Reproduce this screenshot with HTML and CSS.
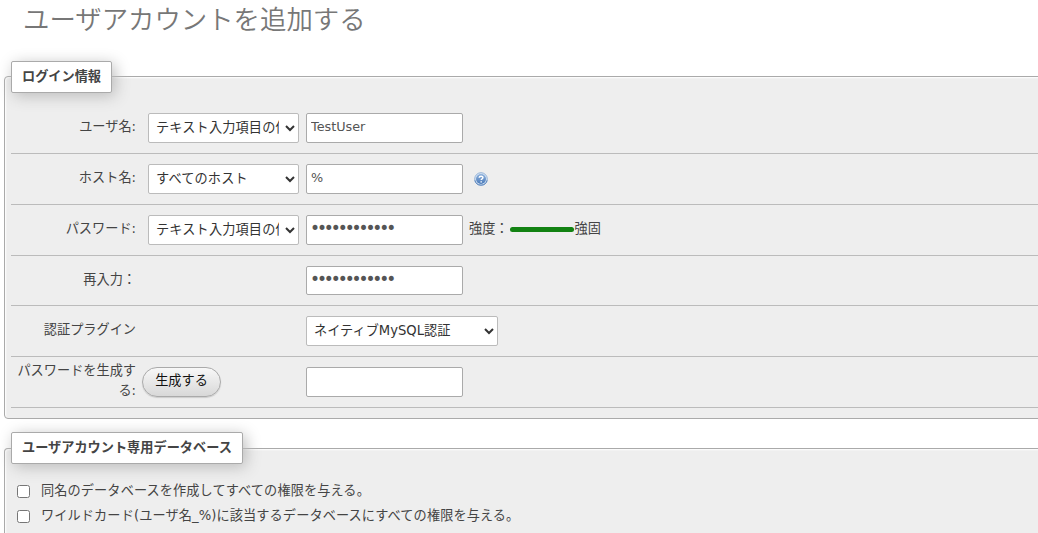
FILE: index.html
```html
<!DOCTYPE html>
<html lang="ja">
<head>
<meta charset="utf-8">
<title>ユーザアカウントを追加する</title>
<link rel="stylesheet" href="styles.css">
</head>
<body>
<h2 class="title">ユーザアカウントを追加する</h2>
<form>
  <section class="panel login">
    <h3 class="legend">ログイン情報</h3>
    <div class="item">
      <label class="name">ユーザ名:</label>
      <div class="options"><select class="control"><option>テキスト入力項目の値を利用する</option></select></div>
      <div class="value"><input class="control text" type="text" value="TestUser"></div>
    </div>
    <div class="item">
      <label class="name">ホスト名:</label>
      <div class="options"><select class="control"><option>すべてのホスト</option></select></div>
      <div class="value"><input class="control text" type="text" value="%">
        <svg class="help" viewBox="0 0 16 16">
          <defs><linearGradient id="blue" x1="0" y1="0" x2="0" y2="1"><stop offset="0" stop-color="#8fb2dc"/><stop offset="1" stop-color="#4a7aba"/></linearGradient></defs>
          <circle cx="8" cy="8" r="7.4" fill="#d9e6f5"/>
          <circle cx="8" cy="8" r="7.2" fill="none" stroke="#8babd3" stroke-width="1"/>
          <path d="M1 9.5a7.2 7.2 0 0 0 14 0" fill="none" stroke="#4f7db8"/>
          <circle cx="8" cy="8" r="5.7" fill="url(#blue)"/>
          <path d="M5.9 6.5C6 4.6 10.3 4.3 10.2 6.6 10.1 7.8 8.2 7.7 8.2 9.2M8.2 10.6v1.5" fill="none" stroke="#fff" stroke-width="1.7"/>
        </svg>
      </div>
    </div>
    <div class="item">
      <label class="name">パスワード:</label>
      <div class="options"><select class="control"><option>テキスト入力項目の値を利用する</option></select></div>
      <div class="value"><input class="control text" type="password" value="abcdefghijkl">
        <div class="strength"><span>強度：</span><span class="meter"></span><span>強固</span></div>
      </div>
    </div>
    <div class="item short">
      <label class="name">再入力：</label>
      <div class="options"></div>
      <div class="value"><input class="control text" type="password" value="abcdefghijkl"></div>
    </div>
    <div class="item">
      <label class="name">認証プラグイン</label>
      <div class="options"></div>
      <div class="value"><select class="control plugin"><option>ネイティブMySQL認証</option></select></div>
    </div>
    <div class="item generate">
      <label class="name">パスワードを生成する:</label>
      <div class="options"><button class="button" type="button">生成する</button></div>
      <div class="value"><input class="control text" type="text"></div>
    </div>
  </section>
  <section class="panel databases">
    <h3 class="legend">ユーザアカウント専用データベース</h3>
    <label class="check"><input type="checkbox"><span>同名のデータベースを作成してすべての権限を与える。</span></label>
    <label class="check"><input type="checkbox"><span>ワイルドカード(ユーザ名_%)に該当するデータベースにすべての権限を与える。</span></label>
  </section>
</form>
</body>
</html>
```
FILE: styles.css
```css
* { box-sizing: border-box; }
html, body { height: 533px; overflow: hidden; }
body {
  margin: 0;
  background: #fff;
  color: #444;
  font: 13.18px/20px "DejaVu Sans", "Noto Sans CJK JP", sans-serif;
}
.title {
  margin: 0;
  height: 76px;
  padding: 0 0 0 23px;
  color: #777;
  font-family: "Noto Sans CJK JP", sans-serif;
  font-size: 26.4px;
  font-weight: 350;
  line-height: 36px;
}
.panel {
  margin: 0 -10px 0 4px;
  padding: 0 6px;
  border: 1px solid #aaa;
  border-radius: 4px;
  background: #eee;
  box-shadow: inset 1px 1px 2px #fff;
}
.login { height: 343px; }
.databases { height: 85px; margin-top: 29px; border-bottom: 0; border-radius: 4px 4px 0 0; }
.legend {
  width: fit-content;
  height: 32px;
  margin: -16px 0 10px;
  padding: 0 10px;
  border: 1px solid #aaa;
  border-radius: 2px;
  background: #fff;
  box-shadow: 3px 3px 15px #bbb;
  font-size: 13.18px;
  font-weight: 700;
  line-height: 29px;
}
.item {
  display: grid;
  grid-template-columns: 125px 170px 1fr;
  height: 51px;
  padding-top: 10px;
  border-bottom: 1px solid #bbb;
}
.short { height: 50px; }
.short .control { height: 29px; }
.name { padding: 4px 0 0; text-align: right; }
.options { padding-left: 12px; }
.value { display: flex; align-items: flex-start; }
.control {
  display: block;
  width: 151px;
  height: 30px;
  margin: 0;
  border: 1px solid #bbb;
  border-radius: 2px;
  background: #fff;
  color: #333;
  font: inherit;
}
select.control { padding: 0 3px 1px; }
.options .control { letter-spacing: 0.15px; }
.text {
  width: 157px;
  padding: 0 4px 4px;
  border-color: #aaa;
  color: #555;
  font-size: 12.8px;
}
.text[type="password"] { padding-left: 3px; font-size: 17px; letter-spacing: -3.1px; }
.plugin { width: 192px; }
.help { width: 14px; height: 14px; margin: 8px 0 0 11px; }
.strength { display: flex; padding: 4px 0 0 6px; }
.meter {
  width: 64px;
  height: 5px;
  margin: 8px 1px 0;
  border-radius: 3px;
  background: #128212;
}
.generate .name { margin-top: -10px; padding-top: 4px; }
.generate .options { padding-left: 6px; }
.button {
  display: block;
  width: 79px;
  height: 30px;
  padding: 0 0 2px;
  border: 1px solid #aaa;
  border-radius: 15px;
  background: linear-gradient(#f8f8f8, #d8d8d8);
  box-shadow: 0 1px 1px #ccc;
  color: #111;
  font: inherit;
}
.check { display: flex; height: 25px; padding-left: 6px; letter-spacing: 0.1px; }
.check span { padding-top: 1px; }
.check input { width: 13px; height: 13px; margin: 5px 11px 0 0; }
.databases .legend { margin: -17px 0 16px; }
```
